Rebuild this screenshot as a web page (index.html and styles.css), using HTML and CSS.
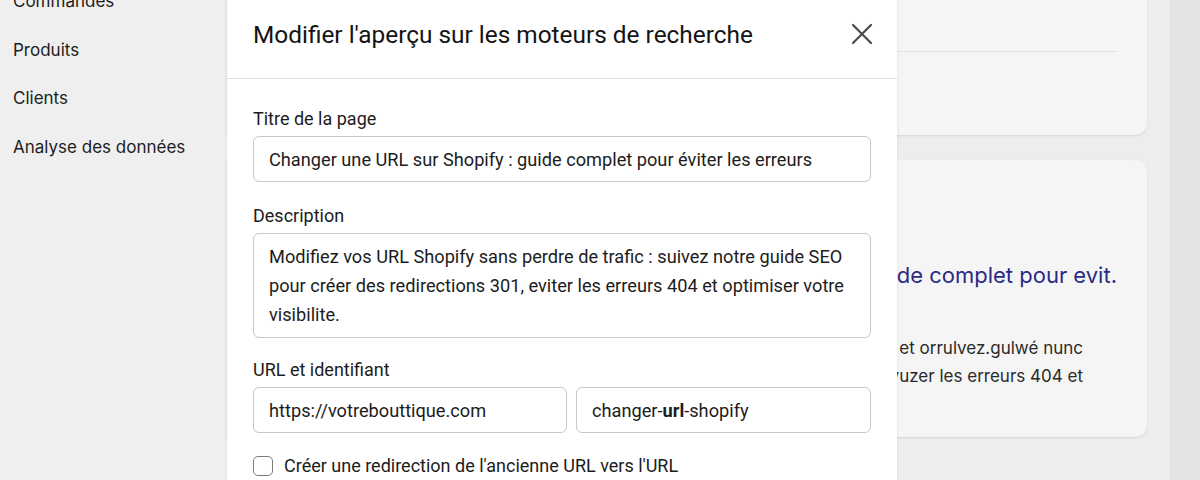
FILE: index.html
```html
<!DOCTYPE html>
<html lang="fr">
<head>
<meta charset="utf-8">
<title>Modifier l'aperçu</title>
<link rel="stylesheet" href="styles.css">
</head>
<body>
<div class="app">
  <nav class="sidebar">
    <div class="nav-item nav-cut">Commandes</div>
    <div class="nav-item">Produits</div>
    <div class="nav-item">Clients</div>
    <div class="nav-item">Analyse des données</div>
  </nav>
  <main class="main">
    <div class="cards">
      <section class="card card-top">
        <div class="card-head"></div>
        <div class="card-body"></div>
      </section>
      <section class="card card-preview">
        <div class="pv-line pv-title"><span>Changer une URL sur Shopify : guide complet pour evit.</span></div>
        <div class="pv-line pv-desc pv-first"><span>Modifiez vos URL Shopify sans perdre de trafic et orrulvez.gulwé nunc</span></div>
        <div class="pv-line pv-desc"><span>pour créer des redirections 301, évuzer les erreurs 404 et</span></div>
      </section>
    </div>
  </main>
  <aside class="strip"></aside>
</div>

<div class="modal">
  <header class="modal-head">
    <h2 class="modal-title">Modifier l'aperçu sur les moteurs de recherche</h2>
    <button class="close" aria-label="Fermer">
      <svg width="22" height="22" viewBox="0 0 22 22"><path d="M2 2 L20 20 M20 2 L2 20" stroke="#4a4a4a" stroke-width="2.2" stroke-linecap="round" fill="none"/></svg>
    </button>
  </header>
  <div class="modal-body">
    <div class="field">
      <label class="label">Titre de la page</label>
      <div class="input">Changer une URL sur Shopify : guide complet pour éviter les erreurs</div>
    </div>
    <div class="field">
      <label class="label">Description</label>
      <div class="input textarea">Modifiez vos URL Shopify sans perdre de trafic : suivez notre guide SEO pour créer des redirections 301, eviter les erreurs 404 et optimiser votre visibilite.</div>
    </div>
    <div class="field field-tight">
      <label class="label">URL et identifiant</label>
      <div class="url-row">
        <div class="input">https://votrebouttique.com</div>
        <div class="input">changer-<b>url</b>-shopify</div>
      </div>
    </div>
    <label class="check">
      <span class="box"></span>
      <span>Créer une redirection de l'ancienne URL vers l'URL</span>
    </label>
  </div>
</div>
</body>
</html>
```

FILE: styles.css
```css
* { box-sizing: border-box; }
html, body { margin: 0; height: 100%; overflow: hidden; }
body {
  font-family: Roboto, "Liberation Sans", sans-serif;
  color: #1c1c1c;
  background: #ececec;
  position: relative;
}
.app { display: flex; height: 480px; }
.sidebar {
  width: 227px;
  flex: none;
  background: #efefef;
  padding: 0 0 0 13px;
  font-family: Inter, "Liberation Sans", sans-serif;
  font-size: 17px;
  color: #1d1d1d;
}
.nav-item { height: 48.5px; line-height: 48.5px; }
.nav-cut { margin-top: -23px; }
.main {
  flex: 1;
  background: #ededed;
  padding: 0 23px 0 0;
}
.cards { display: flex; flex-direction: column; gap: 25px; margin-top: -20px; }
.card {
  background: #f5f5f5;
  border-radius: 0 12px 12px 0;
  box-shadow: 0 1px 2px rgba(0,0,0,0.10);
  overflow: hidden;
}
.card-top { height: 155px; }
.card-head { height: 72px; margin-right: 30px; border-bottom: 1px solid #e3e3e3; }
.card-preview { height: 277px; padding: 100px 30px 0 0; font-family: Inter, "Liberation Sans", sans-serif; }
.pv-line { display: flex; justify-content: flex-end; white-space: nowrap; }
.pv-title { font-size: 22px; color: #2b2a85; line-height: 30px; }
.pv-desc { font-size: 17px; color: #2a2a2a; line-height: 28px; padding-right: 34px; }
.pv-first { margin-top: 44px; }
.strip { width: 30px; flex: none; background: #e4e4e4; }

.modal {
  position: absolute;
  left: 227px;
  top: 0;
  width: 670px;
  height: 520px;
  background: #fff;
  box-shadow: 0 0 4px rgba(0,0,0,0.08);
}
.modal-head {
  height: 79px;
  border-bottom: 1px solid #e1e1e1;
  display: flex;
  align-items: center;
  justify-content: space-between;
  padding: 0 24px 10px 26px;
}
.modal-title { margin: 0; font-size: 24.4px; font-weight: 400; color: #141414; }
.close { border: 0; background: none; padding: 0; width: 22px; height: 22px; display: flex; }
.modal-body { padding: 29px 26px 0 26px; }
.field { margin-bottom: 23px; }
.field-tight { margin-bottom: 20px; }
.field:nth-child(2) { margin-bottom: 21px; }
.label { display: block; font-size: 18px; line-height: 22px; color: #1c1c1c; margin-bottom: 6px; }
.input {
  border: 1px solid #c8c8c8;
  border-radius: 6px;
  height: 46px;
  padding: 0 15px;
  display: flex;
  align-items: center;
  font-size: 18.2px;
  color: #1c1c1c;
  white-space: nowrap;
  overflow: hidden;
}
.input b { font-weight: 700; }
.textarea {
  height: 105px;
  display: block;
  white-space: normal;
  line-height: 29px;
  padding: 8px 14px 8px 15px;
}
.url-row { display: grid; grid-template-columns: 314px 1fr; gap: 9px; }
.check { display: flex; align-items: center; gap: 11px; font-size: 18px; margin-top: 22px; }
.box { width: 20px; height: 20px; border: 1.5px solid #7c7c7c; border-radius: 5px; background: #fff; flex: none; }
```
